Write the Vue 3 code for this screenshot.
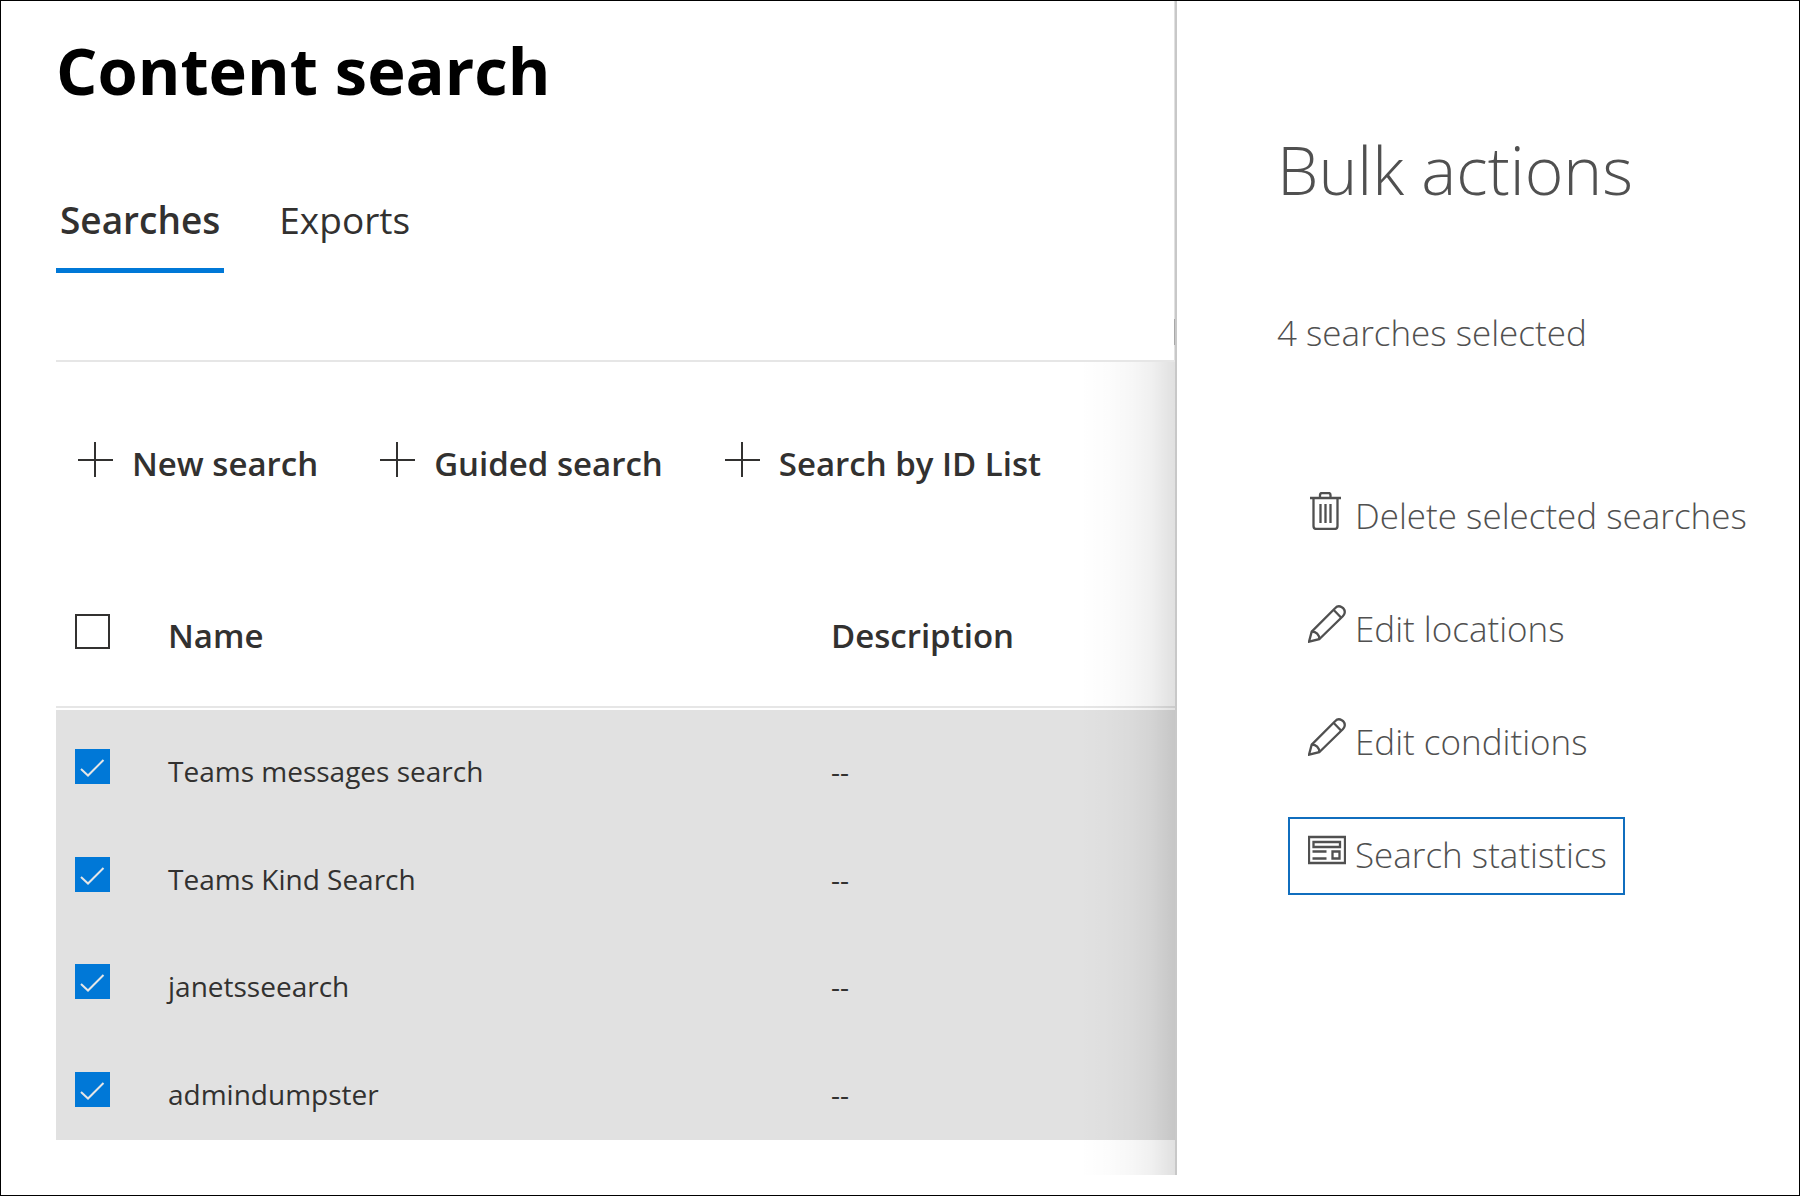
<script setup>
import { ref } from 'vue'

const tabs = ['Searches', 'Exports']
const activeTab = ref('Searches')

const commands = ['New search', 'Guided search', 'Search by ID List']

const searches = ref([
  { name: 'Teams messages search', description: '--', selected: true },
  { name: 'Teams Kind Search', description: '--', selected: true },
  { name: 'janetsseearch', description: '--', selected: true },
  { name: 'admindumpster', description: '--', selected: true },
])
const allMarked = ref(false)

const actions = [
  { label: 'Delete selected searches', icon: 'trash' },
  { label: 'Edit locations', icon: 'pencil' },
  { label: 'Edit conditions', icon: 'pencil' },
  { label: 'Search statistics', icon: 'report', focused: true },
]
</script>

<template>
  <div class="shell">
    <main class="main">
      <header class="top">
        <h1>Content search</h1>
        <nav class="tabs" role="tablist">
          <button
            v-for="tab in tabs"
            :key="tab"
            type="button"
            role="tab"
            class="tab"
            :class="{ active: tab === activeTab }"
            :aria-selected="tab === activeTab"
            @click="activeTab = tab"
          >{{ tab }}</button>
        </nav>
        <span class="thumb"></span>
      </header>

      <section class="content">
        <div class="commands">
          <button v-for="c in commands" :key="c" type="button" class="command">
            <svg class="plus" viewBox="0 0 35 35" aria-hidden="true">
              <path d="M17 0V35M0 18H35" />
            </svg>
            <span>{{ c }}</span>
          </button>
        </div>

        <table class="list">
          <colgroup>
            <col class="col-check" />
            <col class="col-name" />
            <col />
          </colgroup>
          <thead>
            <tr>
              <th class="check-cell">
                <input v-model="allMarked" type="checkbox" class="box" aria-label="Select all searches" />
              </th>
              <th>Name</th>
              <th>Description</th>
            </tr>
          </thead>
          <tbody>
            <tr v-for="s in searches" :key="s.name" :class="{ selected: s.selected }">
              <td class="check-cell">
                <label class="check">
                  <input v-model="s.selected" type="checkbox" class="box" :aria-label="s.name" />
                  <svg v-if="s.selected" class="mark" viewBox="0 0 35 35" aria-hidden="true">
                    <path d="M6 20L13 26.500L28.500 11" />
                  </svg>
                </label>
              </td>
              <td>{{ s.name }}</td>
              <td>{{ s.description }}</td>
            </tr>
          </tbody>
        </table>
        <div class="shade"></div>
      </section>
    </main>

    <aside class="panel">
      <h2>Bulk actions</h2>
      <p>4 searches selected</p>
      <div class="actions">
        <button
          v-for="a in actions"
          :key="a.label"
          type="button"
          class="action"
          :class="{ focused: a.focused }"
        >
          <svg class="icon" viewBox="0 0 38 38" aria-hidden="true">
            <g v-if="a.icon === 'trash'">
              <path d="M2 6H33M12 6V3Q12 1 14 1H20.500Q22.500 1 22.500 3V6" />
              <path d="M5.500 6V34Q5.500 37 8.500 37H26.500Q29.500 37 29.500 34V6" />
              <path d="M12.500 12V31M17.500 12V31M22.500 12V31" />
            </g>
            <g v-else-if="a.icon === 'pencil'">
              <path d="M1 36.700L3.700 26.600L27.300 3C31 -1 38 3 36.500 8.500C36.200 9.800 35.500 10.500 34.800 11.200L11.200 34.200Z" />
              <path d="M25.500 4.800L33 12.500M3.700 26.600C8 26.500 11.500 29.500 11.200 34.200" />
            </g>
            <g v-else>
              <path d="M1 6H37V32H1Z" />
              <path d="M5.500 11H32V16H5.500Z" />
              <path d="M4.500 20.500H18.500M4.500 27.500H18.500" />
              <path d="M24.500 20.500H31.500V27.500H24.500Z" />
            </g>
          </svg>
          <span>{{ a.label }}</span>
        </button>
      </div>
    </aside>
  </div>
</template>

<style>
body {
  background: #fff;
}
</style>

<style scoped>
.shell {
  box-sizing: border-box;
  display: grid;
  grid-template-columns: minmax(0, 1fr) 624px;
  min-height: 100vh;
  padding-bottom: 20px;
  border: 1px solid #000;
  background: #fff;
  color: #323130;
  font-family: "Open Sans", "Noto Sans", sans-serif;
}

button {
  margin: 0;
  padding: 0;
  border: 0;
  background: none;
  color: inherit;
  font: inherit;
  text-align: left;
  white-space: nowrap;
}

.main {
  display: flex;
  flex-direction: column;
  padding-left: 55px;
}

.top {
  position: relative;
  padding: 25px 0 87px;
  border-right: 1px solid #e1e1e1;
}

h1 {
  margin: 0 0 81px;
  color: #000;
  font-size: 65px;
  font-weight: 700;
  line-height: 88px;
}

.tabs {
  display: flex;
  gap: 51px;
}

.tab {
  padding: 0 4px 23px;
  border-bottom: 5px solid transparent;
  font-size: 37px;
  line-height: 50px;
}

.tab.active {
  border-bottom-color: #0078d7;
  font-weight: 600;
}

.thumb {
  position: absolute;
  right: -1px;
  bottom: 15px;
  width: 1px;
  height: 26px;
  background: #a8a8a8;
}

.content {
  position: relative;
  flex: 1;
  padding: 80px 0 35px;
  border-top: 2px solid #e6e6e6;
}

.commands {
  display: flex;
  gap: 62px;
  padding-left: 22px;
}

.command {
  display: flex;
  align-items: flex-start;
  gap: 19px;
  font-size: 33px;
  font-weight: 600;
  line-height: 44px;
}

.plus {
  width: 35px;
  height: 35px;
  fill: none;
  stroke: #323130;
  stroke-width: 2;
}

.list {
  width: 100%;
  margin-top: 88px;
  table-layout: fixed;
  border-spacing: 0;
}

.col-check {
  width: 112px;
}

.col-name {
  width: 663px;
}

th {
  padding: 40px 0 52px;
  background: linear-gradient(#e6e6e6, #e6e6e6) 0 calc(100% - 2px) / 100% 2px no-repeat;
  font-size: 33px;
  font-weight: 600;
  line-height: 44px;
  text-align: left;
  vertical-align: top;
}

td {
  box-sizing: border-box;
  height: 108px;
  padding: 39px 0 0;
  font-size: 28px;
  line-height: 44px;
  vertical-align: top;
}

tr:nth-child(even) td {
  height: 107px;
}

.selected {
  background: #e1e1e1;
}

th.check-cell,
td.check-cell {
  padding-left: 19px;
}

.check {
  position: relative;
  display: block;
  width: 35px;
  height: 35px;
}

.box {
  appearance: none;
  display: block;
  box-sizing: border-box;
  width: 35px;
  height: 35px;
  margin: 0;
  border: 2px solid #323130;
  background: #fff;
}

.box:checked {
  border-color: #0078d7;
  background: #0078d7;
}

.mark {
  position: absolute;
  inset: 0;
  fill: none;
  stroke: #e6e6e6;
  stroke-width: 2;
  pointer-events: none;
}

.shade {
  position: absolute;
  top: 0;
  right: 0;
  bottom: 0;
  width: 96px;
  background: linear-gradient(
    to right,
    rgba(0, 0, 0, 0),
    rgba(0, 0, 0, 0.01) 30%,
    rgba(0, 0, 0, 0.03) 55%,
    rgba(0, 0, 0, 0.06) 75%,
    rgba(0, 0, 0, 0.12)
  );
  pointer-events: none;
}

.panel {
  padding: 123px 0 0 100px;
  border-left: 2px solid #c8c8c8;
  color: #505050;
  font-weight: 350;
}

h2 {
  margin: 0 0 95px;
  font-size: 66px;
  font-weight: 350;
  line-height: 90px;
}

p {
  margin: 0 0 121px;
  font-size: 35px;
  line-height: 48px;
}

.actions {
  display: flex;
  flex-direction: column;
  align-items: flex-start;
  gap: 35px;
  padding-left: 11px;
}

.action {
  display: flex;
  align-items: flex-start;
  gap: 9px;
  padding: 12px 16px 14px 18px;
  border: 2px solid transparent;
  font-size: 35px;
  line-height: 48px;
}

.action.focused {
  border-color: #106ebe;
}

.icon {
  width: 38px;
  height: 38px;
  fill: none;
  stroke: #505050;
  stroke-width: 2.300;
}
</style>
